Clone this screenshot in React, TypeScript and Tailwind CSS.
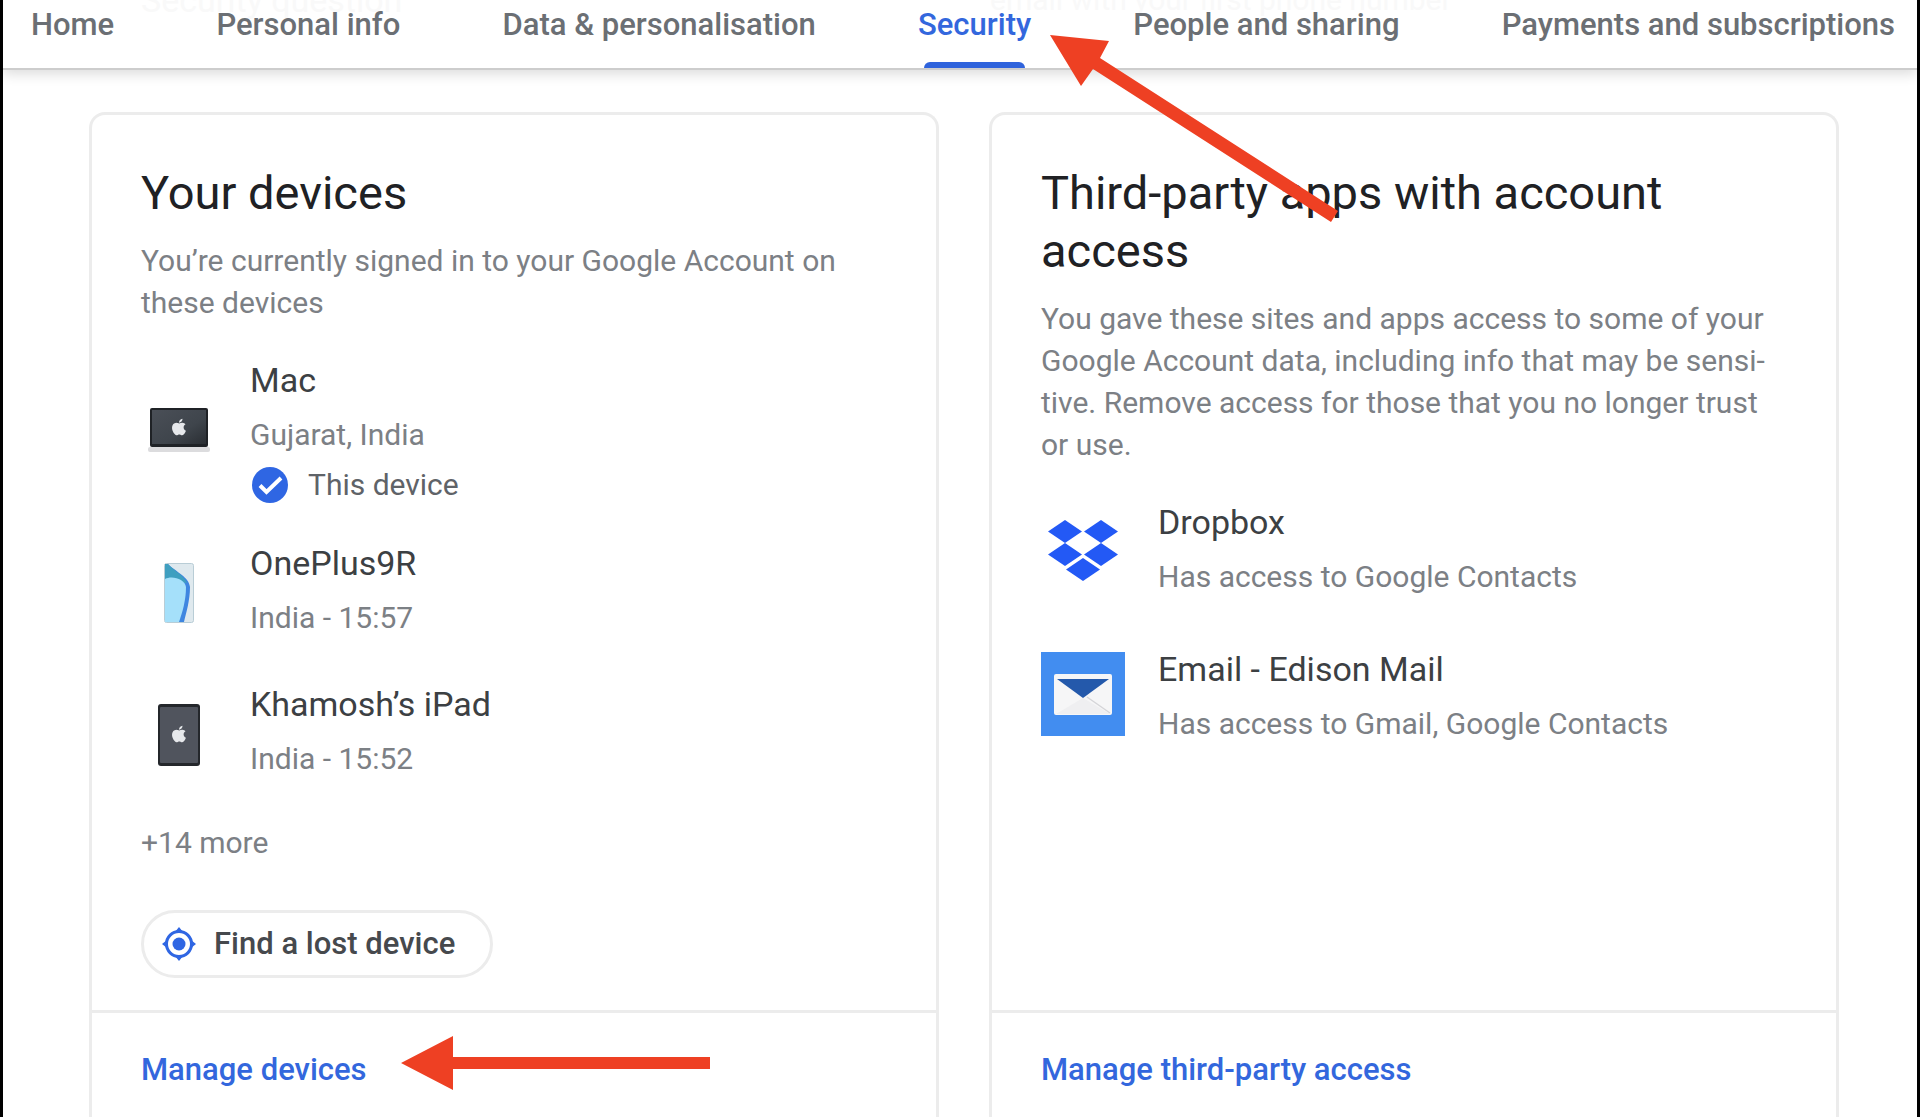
import type { ReactNode } from "react";

const tabs = [
  "Home",
  "Personal info",
  "Data & personalisation",
  "Security",
  "People and sharing",
  "Payments and subscriptions",
];

const applePath =
  "M17.05 20.28c-.98.95-2.05.8-3.08.35-1.09-.46-2.09-.48-3.24 0-1.44.62-2.2.44-3.06-.35C2.79 15.25 3.51 7.59 9.05 7.31c1.35.07 2.29.74 3.08.8 1.18-.24 2.31-.93 3.57-.84 1.51.12 2.65.72 3.4 1.8-3.12 1.87-2.38 5.98.48 7.13-.57 1.5-1.31 2.99-2.54 4.09zM12.03 7.25c-.15-2.23 1.66-4.07 3.74-4.25.29 2.58-2.34 4.5-3.74 4.25z";

function MacIcon() {
  return (
    <svg className="mt-13 h-12 w-[62px]" viewBox="0 0 62 48" aria-hidden="true">
      <defs>
        <linearGradient id="lid" x1="0" y1="0" x2="1" y2="1">
          <stop offset="0" stopColor="#4a4f57" />
          <stop offset="0.6" stopColor="#3f454c" />
          <stop offset="1" stopColor="#2a2e33" />
        </linearGradient>
      </defs>
      <rect x="0" y="39" width="62" height="5" rx="2" fill="#dcdcde" />
      <rect x="2" y="0" width="58" height="39" rx="2" fill="#1f2226" />
      <rect x="4" y="2" width="54" height="34" fill="url(#lid)" />
      <svg x="20" y="8" width="22" height="22" viewBox="0 0 24 24">
        <path d={applePath} fill="#e6e8eb" />
      </svg>
    </svg>
  );
}

function PhoneIcon() {
  return (
    <svg className="mt-6 h-[60px] w-[30px]" viewBox="0 0 30 60" aria-hidden="true">
      <rect x="0.5" y="0.5" width="29" height="59" rx="2" fill="#dfe9ee" stroke="#b9cdd6" />
      <path d="M1 1L4 1C12 9 25 14 26 24C26 38 22 50 20 59H1Z" fill="#3f86e0" />
      <path d="M1 1H4C10 8 20 12 23 20L1 17Z" fill="#3f9fc0" />
      <path d="M1 16C8 12 21 16 22 24C22 38 18 50 15 59H1Z" fill="#a5e0fa" />
    </svg>
  );
}

function TabletIcon() {
  return (
    <svg className="mt-6 h-[62px] w-[42px]" viewBox="0 0 42 62" aria-hidden="true">
      <rect x="0" y="0" width="42" height="62" rx="3" fill="#24272b" />
      <rect x="2" y="3" width="38" height="56" rx="1" fill="#50545d" />
      <svg x="10" y="19" width="22" height="22" viewBox="0 0 24 24">
        <path d={applePath} fill="#e6e8eb" />
      </svg>
    </svg>
  );
}

function CheckIcon() {
  return (
    <svg className="h-[38px] w-[38px]" viewBox="0 0 38 38" aria-hidden="true">
      <circle cx="20" cy="19" r="18" fill="#2f66e3" />
      <path d="M10 19.500L16.500 26L31 12" fill="none" stroke="#fff" strokeWidth="4" />
    </svg>
  );
}

function LocateIcon() {
  return (
    <svg className="h-9 w-9" viewBox="0 0 36 36" aria-hidden="true">
      <circle cx="18" cy="18" r="12.500" fill="none" stroke="#2f66e3" strokeWidth="3" />
      <circle cx="18" cy="18" r="6.500" fill="#2f66e3" />
      <path d="M18 1L22 6H14ZM18 35L22 30H14ZM1 18L6 14V22ZM35 18L30 14V22Z" fill="#2f66e3" />
    </svg>
  );
}

function DropboxIcon() {
  return (
    <svg className="mt-[22px] h-[62px] w-[72px]" viewBox="0 0 72 62" aria-hidden="true">
      <g fill="#2359f5">
        <path d="M18 0L35 11.500L18 23L1 11.500Z" />
        <path d="M54 0L71 11.500L54 23L37 11.500Z" />
        <path d="M18 23L35 34.500L18 46L1 34.500Z" />
        <path d="M54 23L71 34.500L54 46L37 34.500Z" />
        <path d="M36 38L53 49.500L36 61L19 49.500Z" />
      </g>
    </svg>
  );
}

function EdisonIcon() {
  return (
    <svg className="mt-[7px] h-[84px] w-[84px]" viewBox="0 0 84 84" aria-hidden="true">
      <rect width="84" height="84" fill="#428df0" />
      <rect x="13" y="22" width="58" height="41" rx="2" fill="#f6f6f7" />
      <path d="M42 46L69 62H15Z" fill="#efeff1" />
      <path d="M46 45L69 61" stroke="#d5d5d8" strokeWidth="1.500" />
      <path d="M16 27H68L42 46Z" fill="#2459ab" />
    </svg>
  );
}

function Item({ icon, title, detail, children }: { icon: ReactNode; title: string; detail: string; children?: ReactNode }) {
  return (
    <>
      {icon}
      <div>
        <h3 className="text-[34px] leading-[48px] text-[#3c4043]">{title}</h3>
        <p className="mt-[10px] text-[30px] leading-[42px] text-[#7c8085]">{detail}</p>
        {children}
      </div>
    </>
  );
}

function Card({ title, intro, action, children }: { title: string; intro: string; action: string; children: ReactNode }) {
  return (
    <section className="flex flex-col rounded-t-2xl border-[3px] border-b-0 border-[#ececec]">
      <div className="flex grow flex-col px-[49px] pt-[49px] pb-8">
        <h2 className="text-[47px] leading-[58px] text-[#202124]">{title}</h2>
        <p className="mt-[18px] text-[30px] leading-[42px] text-[#7c8085]">{intro}</p>
        {children}
      </div>
      <div className="border-t-[3px] border-[#ececec] px-[49px] pt-9 pb-12">
        <a href="#manage" className="text-[31px] leading-[42px] font-medium text-[#3367dd]">
          {action}
        </a>
      </div>
    </section>
  );
}

export default function App() {
  return (
    <div className="relative h-screen overflow-hidden border-x-[3px] border-black bg-white font-[Roboto,sans-serif]">
      <header className="relative border-b-2 border-[#cdcdcd] bg-white shadow-[0_4px_12px_rgba(0,0,0,0.14)]">
        <div className="absolute inset-x-0 top-0 grid grid-cols-2 text-[30px] leading-8 text-[#f9f9f9]" aria-hidden="true">
          <span className="-mt-4 pl-[138px] text-[34px]">Security question</span>
          <span className="-mt-4 pl-[30px]">email with your first phone number</span>
        </div>
        <nav className="relative flex justify-between pr-[22px] pl-7">
          {tabs.map((tab) => (
            <a
              key={tab}
              href="#tab"
              className={
                tab === "Security"
                  ? "flex flex-col text-[31px] font-medium text-[#3367dd]"
                  : "flex flex-col text-[31px] font-medium text-[#6b6f74]"
              }
            >
              <span className="pt-[3px] pb-[15px] leading-[44px]">{tab}</span>
              {tab === "Security" && <span className="mx-[6px] h-[6px] rounded-t-md bg-[#2f63dc]" />}
            </a>
          ))}
        </nav>
      </header>

      <main className="grid grid-cols-2 gap-[50px] pt-[42px] pr-[78px] pl-[86px]">
        <Card
          title="Your devices"
          intro="You’re currently signed in to your Google Account on these devices"
          action="Manage devices"
        >
          <div className="mt-8 grid grid-cols-[76px_1fr] justify-items-center gap-x-[33px] gap-y-[41px] [&>div]:justify-self-start">
            <Item icon={<MacIcon />} title="Mac" detail="Gujarat, India">
              <div className="mt-2 -mb-2 flex items-center gap-5 text-[30px] leading-[42px] text-[#5f6368]">
                <CheckIcon />
                <span>This device</span>
              </div>
            </Item>
            <Item icon={<PhoneIcon />} title="OnePlus9R" detail="India - 15:57" />
            <Item icon={<TabletIcon />} title="Khamosh’s iPad" detail="India - 15:52" />
          </div>
          <p className="mt-[42px] text-[30px] leading-[42px] text-[#7c8085]">+14 more</p>
          <button className="mt-[46px] flex h-[68px] items-center gap-[17px] self-start rounded-full border-[3px] border-[#ececec] pr-[35px] pl-[17px] text-[31px] font-medium text-[#46494d]">
            <LocateIcon />
            Find a lost device
          </button>
        </Card>

        <Card
          title="Third-party apps with account access"
          intro="You gave these sites and apps access to some of your Google Account data, including info that may be sensi&shy;tive. Remove access for those that you no longer trust or use."
          action="Manage third-party access"
        >
          <div className="mt-8 grid grid-cols-[84px_1fr] justify-items-center gap-x-[33px] gap-y-[47px] [&>div]:justify-self-start">
            <Item icon={<DropboxIcon />} title="Dropbox" detail="Has access to Google Contacts" />
            <Item icon={<EdisonIcon />} title="Email - Edison Mail" detail="Has access to Gmail, Google Contacts" />
          </div>
        </Card>
      </main>

      <svg className="pointer-events-none absolute top-[34px] left-[1047px] h-[190px] w-[292px]" viewBox="0 0 292 190" fill="#ee4023" aria-hidden="true">
        <path d="M0 1L59 7L50 24L288 177L281 188L43 35L31 52Z" />
      </svg>
      <svg className="pointer-events-none absolute top-[1036px] left-[398px] h-[54px] w-[310px]" viewBox="0 0 310 54" fill="#ee4023" aria-hidden="true">
        <path d="M0 27L52 0V21H309V33H52V54Z" />
      </svg>
    </div>
  );
}
